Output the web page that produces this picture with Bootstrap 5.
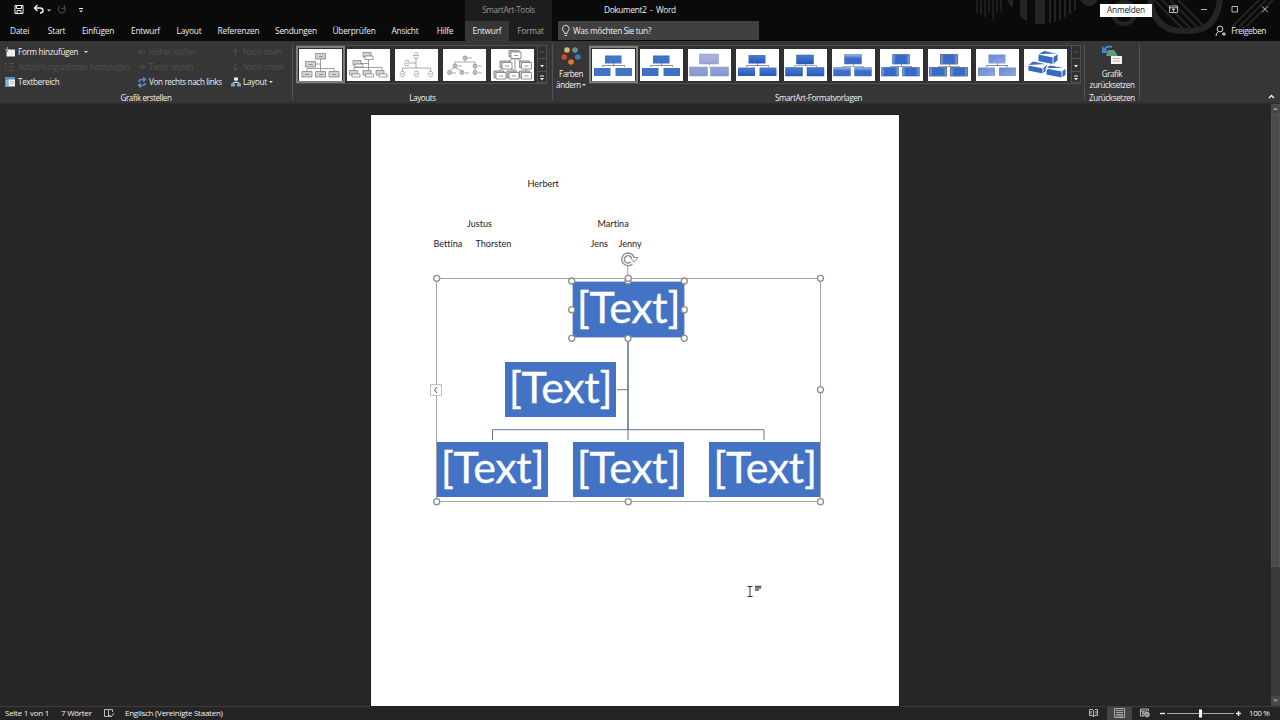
<!DOCTYPE html>
<html lang="de">
<head>
<meta charset="utf-8">
<title>Dokument2 - Word</title>
<link rel="stylesheet" href="https://cdn.jsdelivr.net/npm/bootstrap@5.3.0/dist/css/bootstrap.min.css">
<style>
  body { width: 1280px; height: 720px; overflow: hidden; background: #262626; color: #f0f0f0;
         font: 500 8.3px/12px "Open Sans", "Noto Sans", sans-serif; letter-spacing: -.22px; white-space: nowrap; cursor: default; }
  svg { display: block; flex: none; }
  .titlebar { height: 41px; background: #0a0a0a; }
  .deco { position: absolute; left: 960px; top: 0; }
  .caption-row { height: 20px; padding-left: 13px; }
  .ctx-title { position: absolute; left: 465px; top: 0; width: 87px; height: 41px; background: #1d1d1d; color: #969696; padding-top: 4px; letter-spacing: -.38px; }
  .doc-title { position: absolute; left: 604px; top: 4px; white-space: pre; letter-spacing: -.35px; }
  .login { width: 52px; height: 13px; background: #fff; color: #222; }
  .tabs { height: 21px; top: 20px; left: 0; width: 1280px; padding-left: 1px; display: grid;
          grid-template-columns: 37px 37px 46px 49px 38px 61px 54px 62px 40px 40px 44px 43px 6px 201px 1fr; line-height: 22px; text-align: center; }
  .tabs .on { background: #363636; margin-top: 1px; line-height: 20px; }
  .tabs .dim { color: #a5a5a5; }
  .search { background: #404040; height: 19px; margin-top: 1px; line-height: 20px; letter-spacing: -.36px; }
  .ribbon { height: 63px; background: #363636; border-bottom: 1px solid #2d2d2d; font-size: 8.1px; letter-spacing: -.4px; }
  .grp { border-right: 1px solid #535353; height: 56px; margin-top: 3px; position: relative; }
  .grp-label { position: absolute; left: 0; right: 0; top: 47.5px; text-align: center; }
  .cmds { display: grid; grid-template-columns: 132px 94px 1fr; grid-template-rows: repeat(3, 15.3px); padding-left: 5px; align-items: center; letter-spacing: -.27px; }
  .cmd { display: flex; align-items: center; gap: 2px; }
  .off { color: #505050; }
  .gallery { height: 39px; margin-top: 1px; border: 1px solid #505050; background: #303030; }
  .thumb { width: 48px; height: 37px; padding: 2.5px 2px; flex: none; }
  .thumb svg { background: #fff; }
  .thumb.sel { border: 2px solid #7c7c7c; padding: .5px 1px; margin-left: -1px; width: 49px; }
  .spin { width: 9px; border-left: 1px solid #505050; }
  .spin svg { border-bottom: 1px solid #505050; }
  .work { height: 602px; }
  .sheet { width: 528px; height: 591px; margin: 11px 0 0 371px; background: #fff; color: #1a1a1a; padding: 58px 0 0 62.5px; position: relative;
           font: 9.1px/20px Lato, sans-serif; letter-spacing: 0; font-variant-ligatures: none; outline: 1px solid #1c1c1c; }
  .ln { height: 20px; padding-top: 1px; }
  .ln span { display: inline-block; }
  .w-a { width: 94px; } .w-b { width: 33.5px; } .w-c { width: 130.5px; } .w-d { width: 42px; } .w-e { width: 115px; } .w-f { width: 28px; }
  .smartart { position: absolute; left: 50px; top: 130px; width: 410px; height: 270px; }
  .node { position: absolute; width: 111px; height: 55px; background: #4472c4; color: #fff; font: 43px/50px Lato, sans-serif; letter-spacing: -.4px; text-align: center; -webkit-text-stroke: .3px #fff; }
  .n1 { left: 151px; top: 36px; width: 113px; height: 57px; border: 1px solid #b9c8e4; line-height: 49px; }
  .n2 { left: 84px; top: 117px; } .n3 { left: 16px; top: 197px; } .n4 { left: 152px; top: 197px; } .n5 { left: 288px; top: 197px; width: 112px; }
  .n3, .n4, .n5 { line-height: 49px; }
  .lines { position: absolute; left: 0; top: 0; }
  .vbar { width: 9px; height: 602px; background: #3a3a3a; }
  .vbar .knob { height: 453px; background: #4a4a4a; border: 1px solid #555; }
  .status { height: 14px; background: #242424; border-top: 1px solid #3c3c3c; padding: 0 11px 2px 5px; font-size: 8px; letter-spacing: -.26px; }
  .view-on { background: #444; width: 25px; height: 13px; margin-top: 1px; }
</style>
<script src="https://cdn.jsdelivr.net/npm/bootstrap@5.3.0/dist/js/bootstrap.bundle.min.js"></script>
</head>
<body class="d-flex flex-column">
<svg width="0" height="0" class="position-absolute">
  <defs>
    <linearGradient id="gd" x2="0" y2="1"><stop stop-color="#4c7bd2"/><stop offset="1" stop-color="#2559ba"/></linearGradient>
    <linearGradient id="gl" x2="0" y2="1"><stop stop-color="#a9b5de"/><stop offset="1" stop-color="#8496d2"/></linearGradient>
    <linearGradient id="gg" x2="0" y2="1"><stop stop-color="#9db9e8"/><stop offset=".4" stop-color="#3d6dc8"/><stop offset="1" stop-color="#3568c4"/></linearGradient>
    <linearGradient id="gs"><stop stop-color="#87a9e0"/><stop offset=".2" stop-color="#386bc7"/><stop offset=".8" stop-color="#386bc7"/><stop offset="1" stop-color="#87a9e0"/></linearGradient>
    <linearGradient id="gp" x2="1" y2="1"><stop stop-color="#6687d3"/><stop offset="1" stop-color="#91a9e1"/></linearGradient>
    <symbol id="org" viewBox="0 0 43 32"><path d="M21.500 14v3M10.500 18v-1.500h22V18" fill="none" stroke="#63758f" stroke-width=".8"/><path d="M13 6.500h16.500v8H13zM2 19h16.500v8H2zM23.500 19H40v8H23.500z"/></symbol>
  </defs>
</svg>

<header class="titlebar position-relative">
  <svg class="deco" width="320" height="41" viewBox="0 0 320 41" fill="none" stroke="#242424">
    <path d="M17 0v13M21 0v15M25 0v17M29 0v13M33 0v20M37 0v13M41 0v12" stroke-width="1.500"/>
    <path d="M47 0h6v8q-4-3-6-8z" fill="#242424" stroke="none"/>
    <path d="M60 0h7v21q-5-2-7-5zM75 0h10v24h-10zM89 0h2v23h-2zM94 0h2v22h-2zM99 0h2v20h-2zM104 0h2v17h-2zM109 0h2v14h-2zM114 0h2v10h-2z" fill="#242424" stroke="none"/>
    <circle cx="129" cy="-3" r="9" fill="#242424" stroke="none"/>
    <circle cx="164" cy="13" r="11" stroke-width="4"/>
    <path d="M190 0q5 31 32 31h7q27 0 31-31" stroke-width="6"/>
    <path d="M194 0l30 30M202 0l29 29M210 0l28 28M218 0l26 26" stroke-width="2"/>
    <path d="M299 0l-27 27M306 0l-27 27M313 0l-27 27" stroke-width="2"/>
  </svg>
  <div class="ctx-title text-center">SmartArt-Tools</div>
  <div class="caption-row d-flex align-items-center position-relative">
    <svg width="72" height="14" viewBox="0 0 72 14" fill="none" stroke="#f3f3f3">
      <path d="M2 2.500h8v8H2zM3.500 2.500v3h5v-3M4 10.500v-3h4v3"/>
      <path d="M22 5h5q3 0 3 2.500T27 10M24.500 2L21.500 5l3 3" stroke-width="1.400"/>
      <path d="M34 6.500h4l-2 2z" fill="#ddd" stroke="none"/>
      <path d="M47 3.200a3.600 3.600 0 1 0 3.500 0M51.500 2.200V5.500H48" stroke="#444" stroke-width="1.200"/>
      <path d="M66 5.500h4" /><path d="M66 7.500h4l-2 2z" fill="#ddd" stroke="none"/>
    </svg>
    <div class="doc-title">Dokument2  -  Word</div>
    <div class="ms-auto d-flex align-items-center gap-3">
      <div class="login text-center">Anmelden</div>
      <svg width="112" height="14" viewBox="0 0 112 14" fill="none" stroke="#c8c8c8" stroke-width=".9">
        <path d="M1.500 3h8v6.500h-8zM1.500 4.800h8M5.500 9V5.500M4 7l1.500-1.500L7 7M33 6.500h6M64 3.500h5.500V9H64zM94 3.300l6 6M100 3.300l-6 6"/>
      </svg>
    </div>
  </div>
  <nav class="tabs position-absolute">
    <span>Datei</span><span>Start</span><span>Einfügen</span><span>Entwurf</span><span>Layout</span><span>Referenzen</span><span>Sendungen</span><span>Überprüfen</span><span>Ansicht</span><span>Hilfe</span><span class="on">Entwurf</span><span class="dim">Format</span><span></span>
    <div class="search d-flex align-items-center">
      <svg width="15" height="16" viewBox="0 0 15 16" fill="none" stroke="#eee" stroke-width=".9"><path d="M6.500 10.500q0-1.500-1-2.500a3.300 3.300 0 1 1 4.600 0q-1 1-1 2.500zM6.500 12.500h2.600"/></svg>
      <span>Was möchten Sie tun?</span>
    </div>
    <div class="d-flex align-items-center justify-content-end" style="padding-right:14px;letter-spacing:-.4px">
      <svg class="me-1" width="12" height="14" viewBox="0 0 12 14" fill="none" stroke="#eee" stroke-width=".9"><circle cx="5" cy="5" r="2.900"/><path d="M1 12q0-3 2.500-4.500M7 9l1 1M9 8v4M7 10h4"/></svg>
      <span>Freigeben</span>
    </div>
  </nav>
</header>

<section class="ribbon d-flex">
  <div class="grp" style="width:293px">
    <div class="cmds">
      <div class="cmd"><svg width="11" height="10"><path d="M1.500 2.500H10V9.500H1.500z" fill="#eee"/><path d="M0 2.500h5M2.500 0v5" stroke="#9a9a9a"/></svg><span>Form hinzufügen</span><svg class="ms-1" width="5" height="4"><path d="M0 1h4L2 3z" fill="#ddd"/></svg></div>
      <div class="cmd off"><svg width="10" height="10" stroke="currentColor"><path d="M1 5h7M5 2L1.500 5 5 8" fill="none"/></svg><span>Höher stufen</span></div>
      <div class="cmd off"><svg width="10" height="10" stroke="currentColor"><path d="M4.500 9V2M1.500 5l3-3.500 3 3.500" fill="none"/></svg><span>Nach oben</span></div>
      <div class="cmd off"><svg width="11" height="10" stroke="currentColor"><path d="M0 1.500h2M4 1.500h5M0 5h2M4 5h5M0 8.500h2M4 8.500h5"/></svg><span>Aufzählungszeichen hinzufügen</span></div>
      <div class="cmd off"><svg width="10" height="10" stroke="currentColor"><path d="M1 5h7M4.500 2L8 5 4.500 8" fill="none"/></svg><span>Tiefer stufen</span></div>
      <div class="cmd off"><svg width="10" height="10" stroke="currentColor"><path d="M4.500 1v7M1.500 5l3 3.500 3-3.500" fill="none"/></svg><span>Nach unten</span></div>
      <div class="cmd"><svg width="11" height="10"><path d="M0 .5h10v9H0z" fill="#f2f2f2"/><path d="M0 .5h10v2H0zM0 2.500h3.500v7H0z" fill="#4e8fcb"/><path d="M1 4h1.500M1 6h1.500M1 8h1.500" stroke="#fff"/><path d="M5 4.500h4M5 6.500h4" stroke="#999" stroke-width=".6"/></svg><span>Textbereich</span></div>
      <div class="cmd"><svg width="10" height="11" fill="none" stroke="#4b91d1" stroke-width="1.500"><path d="M2 5q0-2.500 3-2.500h3M6 .5l2.500 2L6 4.800M8 6q0 2.500-3 2.500H2M4 6.200L1.500 8.500 4 10.500"/></svg><span style="letter-spacing:-.34px">Von rechts nach links</span></div>
      <div class="cmd"><svg width="10" height="10"><path d="M5 3v3M2 7V5.500h6V7" fill="none" stroke="#ccc"/><path d="M3 .5h4v3H3z" fill="#eee"/><path d="M0 6.500h4v3H0zM6 6.500h4v3H6z" fill="#74a9dc"/></svg><span>Layout</span><svg width="5" height="4"><path d="M0 1h4L2 3z" fill="#ddd"/></svg></div>
    </div>
    <div class="grp-label">Grafik erstellen</div>
  </div>

  <div class="grp" style="width:260px">
    <div class="gallery d-flex" style="width:251px;margin-left:3px">
      <div class="thumb sel"><svg width="43" height="32" fill="#d2d2d2" stroke="#777" stroke-width=".7"><path d="M21.500 9v13M16 15h5.500M8 22v-2.500h27V22" fill="none"/><path d="M16.500 4.500h10v5.500h-10zM6.500 12.500h10V18h-10zM3 22.500h10V28H3zM16.500 22.500h10V28h-10zM30 22.500h10V28H30z"/><path d="M20 7.500h4M9.500 15.500h4M6 25.500h4M20 25.500h4M33 25.500h4"/></svg></div>
      <div class="thumb"><svg width="43" height="32" fill="#d2d2d2" stroke="#777" stroke-width=".7"><path d="M21.500 9v12M13 14.500h8.500M7 21v-2.500h28V21" fill="none"/><path d="M16 3.500h8v4.500h-8zM6 11.500h8V16H6zM2.500 21.500h8V26h-8zM16 21.500h8V26h-8zM29 21.500h8V26h-8z"/><path d="M18 7h8v3.500h-8zM8 15h8v3H8zM5 25h8v3H5zM18.500 25h8v3h-8zM32 25h8v3h-8z" fill="#fff"/></svg></div>
      <div class="thumb"><svg width="43" height="32" fill="none" stroke="#888" stroke-width=".7"><path d="M21 9v10M15 14h6M7.500 22v-3h28v3"/><g stroke-dasharray="5.500 3" stroke-dashoffset="-1.500"><circle cx="21" cy="6.500" r="2.700"/><circle cx="12" cy="14" r="2.700"/><circle cx="7.500" cy="25" r="2.700"/><circle cx="21.500" cy="25" r="2.700"/><circle cx="35.500" cy="25" r="2.700"/></g><path d="M18 6.500h6M9 14h6M4.500 25h6M18.500 25h6M32.500 25h6"/></svg></div>
      <div class="thumb"><svg width="43" height="32" fill="#c2c2c2" stroke="#888" stroke-width=".7"><path d="M22 10v3M12 16v-3h20v3M6.500 22l5-4 7 4M32 18v4M24 9h5M15 17h4M35 17h4M9 24h4M22 24h4M35 24h4" fill="none"/><circle cx="22" cy="9" r="2"/><circle cx="12" cy="17" r="2"/><circle cx="32" cy="17" r="2"/><circle cx="6.500" cy="23.500" r="2"/><circle cx="19" cy="23.500" r="2"/><circle cx="32" cy="23.500" r="2"/></svg></div>
      <div class="thumb"><svg width="43" height="32" fill="#ccc" stroke="#777" stroke-width=".8"><path d="M24 8v13M14 14l10-5 10 5M8 22l6-5 10 5M35 22v-6" fill="none"/><path d="M18 1.500h10V8H18zM9 12h10v6.500H9zM28.500 12h10v6.500h-10zM3 22h10v6.500H3zM16 22h10v6.500H16zM28.500 22h10v6.500h-10z"/><path d="M20 3h10v6.500H20zM11 13.500h10V20H11zM30.500 13.500h10V20h-10zM5 23.500h10V30H5zM18 23.500h10V30H18zM30.500 23.500h10V30h-10z" fill="#fff"/><path d="M23 6.500h4M14 17h4M33.500 17h4M8 27h4M21 27h4M33.500 27h4"/></svg></div>
      <div class="spin ms-auto"><svg width="8" height="13"><path d="M2 7h4L4 5z" fill="#555"/></svg><svg width="8" height="13"><path d="M2 6h4L4 8.500z" fill="#eee"/></svg><svg width="8" height="11"><path d="M2 4h4" stroke="#eee"/><path d="M2 6h4L4 8.500z" fill="#eee"/></svg></div>
    </div>
    <div class="grp-label">Layouts</div>
  </div>

  <div class="grp d-flex" style="width:532px">
    <div class="text-center pt-1" style="width:36px">
      <svg class="mx-auto" width="20" height="18" style="margin-top:-1px"><circle cx="6" cy="3" r="2.800" fill="#e3b36a"/><circle cx="14" cy="3" r="2.800" fill="#5e9a8c"/><circle cx="3.200" cy="10" r="2.800" fill="#ca4d31"/><circle cx="16.800" cy="10" r="2.800" fill="#4279b9"/><circle cx="10" cy="15" r="2.800" fill="#dc752d"/></svg>
      <div style="line-height:11px;margin-top:3px">Farben<br>ändern<svg class="d-inline" width="5" height="4"><path d="M1 0h4L3 2z" fill="#ddd"/></svg></div>
    </div>
    <div class="gallery d-flex" style="width:492px">
      <div class="thumb sel"><svg width="43" height="32" fill="#4472c4"><use href="#org"/></svg></div>
      <div class="thumb"><svg width="43" height="32" fill="#4070c7"><use href="#org"/></svg></div>
      <div class="thumb"><svg width="43" height="32" fill="url(#gl)" stroke="#8b93b8" stroke-width=".5"><path d="M21.500 14v5M11.500 5h19v10h-19zM1.500 18h18v9h-18zM22.500 18h18v9h-18z"/></svg></div>
      <div class="thumb"><svg width="43" height="32"><g fill="none" stroke="#63758f" stroke-width=".8"><path d="M21.500 14v3M10.500 18v-1.500h22V18"/></g><path fill="url(#gd)" d="M12.500 6h17v8.500h-17z"/><path fill="url(#gd)" d="M2 18.500h17V27H2z"/><path fill="url(#gd)" d="M23.500 18.500h17V27h-17z"/></svg></div>
      <div class="thumb"><svg width="43" height="32" stroke="#2b56a6" stroke-width=".5"><path d="M21.500 14v3M10.500 18v-1.500h22V18" fill="none"/><path fill="url(#gd)" d="M12.500 6h17v9h-17z"/><path fill="url(#gd)" d="M1.500 18.500h17V27h-17z"/><path fill="url(#gd)" d="M23 18.500h17V27H23z"/></svg></div>
      <div class="thumb"><svg width="43" height="32" stroke="#5b7eba" stroke-width=".6"><path d="M21.500 15v2.500M10.500 18.500v-1h21v1" fill="none"/><path fill="url(#gg)" d="M12.500 5.500h17V15h-17z"/><path fill="url(#gg)" d="M1.500 18.500h17V27h-17z"/><path fill="url(#gg)" d="M22.500 18.500h17V27h-17z"/></svg></div>
      <div class="thumb"><svg width="43" height="32" stroke="#2e5cad" stroke-width=".6"><path d="M21.500 15v2.500M10.500 18.500v-1h21v1" fill="none"/><path fill="url(#gs)" d="M12.500 5.500h17V15h-17z"/><path fill="url(#gs)" d="M1.500 18.500h17V27h-17z"/><path fill="url(#gs)" d="M22.500 18.500h17V27h-17z"/></svg></div>
      <div class="thumb"><svg width="43" height="32" stroke="#66748e" stroke-width="1.100"><path d="M21.500 15v2.500M10.500 18.500v-1h21v1" fill="none" stroke-width=".6"/><path fill="url(#gs)" d="M12.500 5.500h17V15h-17z"/><path fill="url(#gs)" d="M1.500 18.500h17V27h-17z"/><path fill="url(#gs)" d="M22.500 18.500h17V27h-17z"/></svg></div>
      <div class="thumb"><svg width="43" height="32"><path d="M21.500 14v3M10.500 18v-1.500h21V18" fill="none" stroke="#63758f" stroke-width=".8"/><path fill="url(#gp)" d="M12.500 5.500h17v9h-17z"/><path fill="url(#gp)" d="M2 18.500h17V27H2z"/><path fill="url(#gp)" d="M23 18.500h17V27H23z"/></svg></div>
      <div class="thumb"><svg width="43" height="32" fill="#376bbd" stroke="#fff" stroke-width=".9"><path d="M14 5l6-3.500 14 3v7l-5 4-15-3zM14 5l15 3 5-3.500M29 8v7.500M4 16l5-4 14 3v6l-4 4-15-3zM4 16l15 3 4-4M19 19v6M22 19l4-3 16 3v7l-4 3-16-3zM22 19l16 3 4-3M38 22v7"/></svg></div>
      <div class="spin ms-auto"><svg width="8" height="13"><path d="M2 7h4L4 5z" fill="#555"/></svg><svg width="8" height="13"><path d="M2 6h4L4 8.500z" fill="#eee"/></svg><svg width="8" height="11"><path d="M2 4h4" stroke="#eee"/><path d="M2 6h4L4 8.500z" fill="#eee"/></svg></div>
    </div>
    <div class="grp-label">SmartArt-Formatvorlagen</div>
  </div>

  <div class="grp text-center" style="width:55px">
    <svg class="mx-auto" width="22" height="21"><path d="M7 6h6l4 6H5z" fill="#609a80"/><path d="M3 7q2-6 8-4" fill="none" stroke="#4386c7" stroke-width="2"/><path d="M1 2v7h7z" fill="#4386c7"/><path d="M10 12h11v8H10z" fill="#f3f3f3"/><path d="M12 14.500h7M12 17h7" stroke="#999" stroke-width=".7"/></svg>
    <div style="line-height:11px;margin-top:3px">Grafik<br>zurücksetzen</div>
    <div class="grp-label">Zurücksetzen</div>
  </div>
  <svg class="ms-auto align-self-end me-1 mb-1" width="9" height="6" fill="none" stroke="#eee" stroke-width="1.400"><path d="M2 5l2.500-2.500L7 5"/></svg>
</section>

<main class="work d-flex justify-content-between">
  <article class="sheet">
    <div class="ln"><span class="w-a"></span><span>Herbert</span></div>
    <div class="ln"></div>
    <div class="ln"><span class="w-b"></span><span class="w-c">Justus</span><span>Martina</span></div>
    <div class="ln"><span class="w-d">Bettina</span><span class="w-e">Thorsten</span><span class="w-f">Jens</span><span>Jenny</span></div>
    <div class="smartart">
      <div class="node n1">[Text]</div>
      <div class="node n2">[Text]</div>
      <div class="node n3">[Text]</div>
      <div class="node n4">[Text]</div>
      <div class="node n5">[Text]</div>
      <svg class="lines" width="410" height="270" fill="none" stroke="#8e8e8e">
        <g stroke="#5f7890"><path d="M207 93v92" stroke-width="1.600"/><path d="M196 144.700h11M71.500 195v-10.300h271.500V195M207 185v10"/></g>
        <path d="M15.500 33.500h384v223h-384zM206.700 21v12" stroke="#a3a3a3"/>
        <path d="M9.500 139.500h11v11h-11z" fill="#fff" stroke="#c2c2c2"/><path d="M16 142l-2.500 3 2.500 3" stroke="#555"/>
        <g fill="#fff" stroke-width="1.300">
          <circle cx="207" cy="36" r="3"/><circle cx="15.700" cy="33.300" r="3"/><circle cx="207.300" cy="33.300" r="3"/><circle cx="399.500" cy="33.300" r="3"/><circle cx="399.500" cy="144.700" r="3"/><circle cx="15.700" cy="256.700" r="3"/><circle cx="207.300" cy="256.700" r="3"/><circle cx="399.500" cy="256.700" r="3"/>
          <circle cx="150.700" cy="36" r="3"/><circle cx="263.300" cy="36" r="3"/><circle cx="150.700" cy="64.700" r="3"/><circle cx="263.300" cy="64.700" r="3"/><circle cx="150.700" cy="93.300" r="3"/><circle cx="207" cy="93.300" r="3"/><circle cx="263.300" cy="93.300" r="3"/>
        </g>
        <path d="M210.500 18a5 5 0 1 1 1.500-4.500" stroke-width="4"/><path d="M209.500 12.500h7.500l-4 4.500z" fill="#fff"/><path d="M210.500 18a5 5 0 1 1 1.500-4.500" stroke="#fff" stroke-width="1.300"/>
      </svg>
    </div>
    <svg class="position-absolute" style="left:376px;top:468px" width="18" height="16" stroke="#333" fill="none"><path d="M.5 3.500h5M3 3.500v10M.5 13.500h5"/><path d="M8 3.500h6.500M8 5.200h6M8 7h4" stroke-width="1.300" stroke="#555"/></svg>
  </article>
  <div class="vbar d-flex flex-column">
    <svg width="9" height="10"><path d="M0 0h9v10H0z" fill="#484848"/><path d="M2 6h5L4.500 3.500z" fill="#999"/></svg>
    <div class="knob"></div>
    <svg class="mt-auto" style="margin-bottom:1px" width="9" height="9"><path d="M0 0h9v9H0z" fill="#484848"/><path d="M2 3.500h5L4.500 6z" fill="#999"/></svg>
  </div>
</main>

<footer class="status d-flex align-items-center">
  <span style="width:56px">Seite 1 von 1</span><span style="width:43px">7 Wörter</span>
  <svg width="21" height="10" fill="none" stroke="#ccc" stroke-width=".9"><path d="M4.500 8.500H.5v-7h4v7L7 8M4.500 1.500h4V4M5 7l2 2 3-4"/></svg>
  <span>Englisch (Vereinigte Staaten)</span>
  <svg class="ms-auto" width="18" height="10" fill="none" stroke="#ccc" stroke-width=".9"><path d="M4 1.500H.5v6H3l1.500 1L6 7.500h2.500v-6H6M4.500 2v6.500M2 3v3M7 3v3"/></svg>
  <div class="view-on d-flex align-items-center justify-content-center"><svg width="11" height="10" fill="none" stroke="#aaa"><path d="M.5.500h10v9H.500zM2 2.500h7M2 4.500h7M2 6.500h7M2 8h7"/></svg></div>
  <svg style="margin-left:8px" width="11" height="10" fill="none" stroke="#ccc" stroke-width=".9"><path d="M4 8H.5V1h8v2M.5 3h7M2 5h3M3 3v5"/><circle cx="7" cy="6.500" r="2.300" fill="#888"/></svg>
  <svg style="margin:0 7px 0 9px" width="82" height="10" stroke="#eee"><path d="M0 5.500h5" stroke-width="1.400"/><path d="M7 5.500h67" stroke="#aaa"/><path d="M76 5.500h5M78.500 3v5" stroke-width="1.300"/><path d="M39 1.500h3v8h-3z" fill="#fff" stroke="none"/></svg>
  <span style="width:20px;letter-spacing:-.4px">100 %</span>
</footer>
</body>
</html>
